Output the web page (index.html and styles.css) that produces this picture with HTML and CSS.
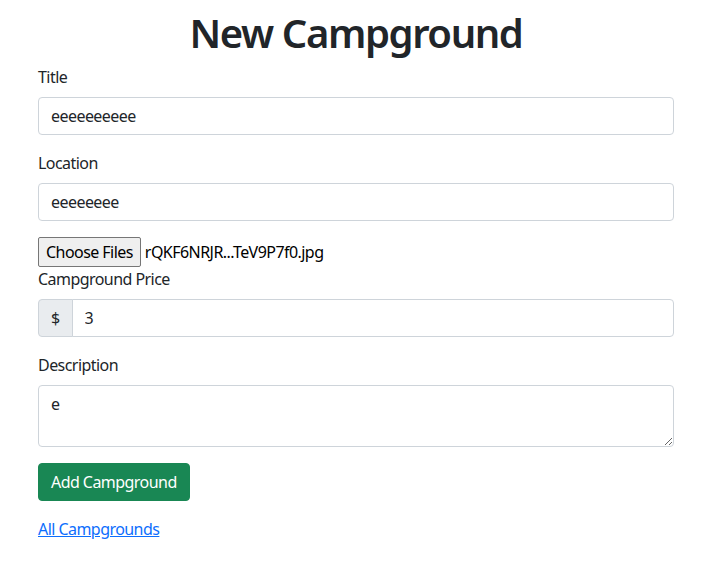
FILE: index.html
```html
<!DOCTYPE html>
<html lang="en">
<head>
<meta charset="utf-8">
<title>New Campground</title>
<link rel="stylesheet" href="styles.css">
</head>
<body>
<main class="page">
  <h1 class="title">New Campground</h1>
  <form class="form">
    <div class="field">
      <label class="label" for="title">Title</label>
      <input class="control" id="title" type="text" value="eeeeeeeeee">
    </div>
    <div class="field">
      <label class="label" for="location">Location</label>
      <input class="control" id="location" type="text" value="eeeeeeee">
    </div>
    <div class="file">
      <span class="file-btn">Choose Files</span>
      <span class="file-name">rQKF6NRJR...TeV9P7f0.jpg</span>
    </div>
    <div class="field">
      <label class="label" for="price">Campground Price</label>
      <div class="group">
        <span class="addon">$</span>
        <input class="control group-control" id="price" type="text" value="3">
      </div>
    </div>
    <div class="field">
      <label class="label" for="description">Description</label>
      <textarea class="control area" id="description" rows="2">e</textarea>
    </div>
    <div class="field">
      <button class="btn" type="button">Add Campground</button>
    </div>
  </form>
  <a class="link" href="#">All Campgrounds</a>
</main>
</body>
</html>
```
FILE: styles.css
```css
* { box-sizing: border-box; }
html, body { margin: 0; padding: 0; background: #fff; }
body {
  font-family: "Noto Sans", "Open Sans", sans-serif;
  font-size: 16px;
  line-height: 1.5;
  letter-spacing: -0.55px;
  color: #212529;
}
.page {
  width: 636px;
  margin: 0 0 0 38px;
  padding-top: 9px;
}
.title {
  margin: 0 0 8px;
  font-size: 40px;
  line-height: 48px;
  font-weight: 600;
  letter-spacing: -1.4px;
  text-align: center;
}
.form { display: flex; flex-direction: column; }
.field { margin-bottom: 16px; display: flex; flex-direction: column; }
.label { display: block; margin-bottom: 8px; line-height: 24px; }
.control {
  display: block;
  width: 100%;
  height: 38px;
  padding: 6px 12px;
  font: inherit;
  font-size: 16px;
  line-height: 24px;
  letter-spacing: -0.55px;
  color: #212529;
  background: #fff;
  border: 1px solid #ced4da;
  border-radius: 4px;
  outline: none;
}
.area { height: 62px; resize: vertical; }
.file { display: flex; align-items: center; gap: 4px; height: 30px; }
.file-btn {
  display: inline-block;
  height: 30px;
  padding: 2px 7px;
  line-height: 24px;
  background: #efefef;
  border: 1px solid #767676;
  border-radius: 2px;
  color: #000;
}
.file-name { color: #000; }
.group { display: flex; }
.addon {
  display: flex;
  align-items: center;
  padding: 6px 12px;
  height: 38px;
  background: #e9ecef;
  border: 1px solid #ced4da;
  border-radius: 4px 0 0 4px;
}
.group-control { flex: 1; margin-left: -1px; border-radius: 0 4px 4px 0; }
.btn {
  align-self: flex-start;
  height: 38px;
  padding: 6px 12px;
  font: inherit;
  font-size: 16px;
  line-height: 24px;
  letter-spacing: -0.55px;
  color: #fff;
  background: #198754;
  border: 1px solid #198754;
  border-radius: 4px;
}
.link { color: #0d6efd; text-decoration: underline; line-height: 24px; }
```
